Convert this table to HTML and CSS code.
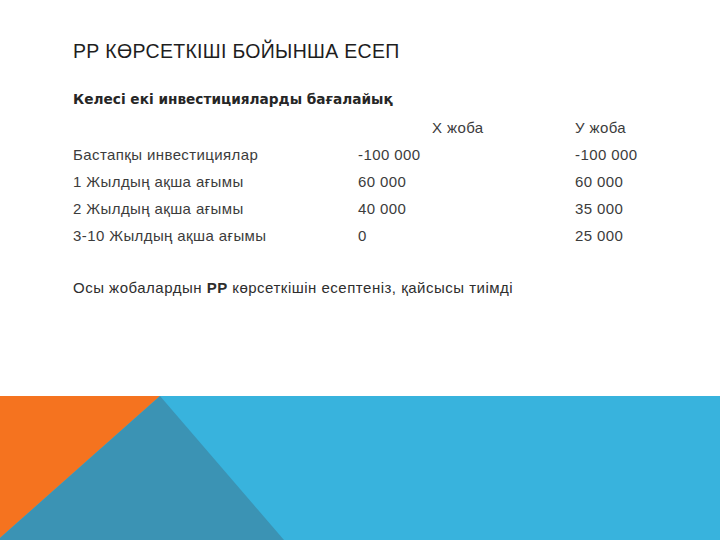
FILE: index.html
```html
<!DOCTYPE html>
<html lang="kk">
<head>
<meta charset="utf-8">
<link rel="stylesheet" href="styles.css">
</head>
<body>
<div class="slide">
  <main class="content">
    <h1 class="title">РР КӨРСЕТКІШІ БОЙЫНША ЕСЕП</h1>
    <p class="lead">Келесі екі инвестицияларды бағалайық</p>
    <div class="table">
      <div class="cell"></div>
      <div class="cell head-x">Х жоба</div>
      <div class="cell">У жоба</div>

      <div class="cell">Бастапқы инвестициялар</div>
      <div class="cell">-100 000</div>
      <div class="cell">-100 000</div>

      <div class="cell">1 Жылдың ақша ағымы</div>
      <div class="cell">60 000</div>
      <div class="cell">60 000</div>

      <div class="cell">2 Жылдың ақша ағымы</div>
      <div class="cell">40 000</div>
      <div class="cell">35 000</div>

      <div class="cell">3-10 Жылдың ақша ағымы</div>
      <div class="cell">0</div>
      <div class="cell">25 000</div>
    </div>
    <p class="question">Осы жобалардын <span class="strong">РР</span> көрсеткішін есептеніз, қайсысы тиімді</p>
  </main>
  <footer class="band">
    <svg class="band-art" viewBox="0 0 720 144" preserveAspectRatio="none" width="720" height="144">
      <rect x="0" y="0" width="720" height="144" fill="#38b3dd"/>
      <polygon points="0,0 160,0 0,142" fill="#f5731f"/>
      <polygon points="160,0 284,144 0,144 0,142" fill="#3b93b4"/>
    </svg>
  </footer>
</div>
</body>
</html>
```
FILE: styles.css
```css
html, body {
  margin: 0;
  padding: 0;
  background: #ffffff;
}
.slide {
  width: 720px;
  height: 540px;
  display: flex;
  flex-direction: column;
  font-family: "Liberation Sans", Arial, sans-serif;
  color: #3a3a3a;
}
.content {
  flex: 1;
  padding: 38px 0 0 73px;
}
.title {
  margin: 0;
  font-size: 19.5px;
  font-weight: normal;
  letter-spacing: 0.3px;
  color: #1e1e1e;
  line-height: 26px;
}
.lead {
  margin: 25px 0 0;
  font-family: "DejaVu Sans", Verdana, sans-serif;
  font-size: 13.7px;
  font-weight: bold;
  color: #262626;
  line-height: 20px;
}
.table {
  margin-top: 5px;
  display: grid;
  grid-template-columns: 285px 217px auto;
  grid-auto-rows: 27px;
  font-size: 15px;
  letter-spacing: 0.4px;
  line-height: 27px;
  color: #3c3c3c;
}
.head-x {
  padding-left: 74px;
}
.question {
  margin: 29px 0 0;
  font-size: 15px;
  letter-spacing: 0.5px;
  line-height: 20px;
  color: #2e2e2e;
}
.strong {
  font-weight: bold;
}
.band {
  height: 144px;
  flex: none;
}
.band-art {
  display: block;
}
```
